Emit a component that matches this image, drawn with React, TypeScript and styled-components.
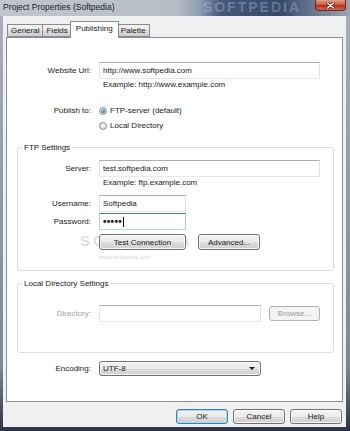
import React from 'react';
import styled, { createGlobalStyle, css } from 'styled-components';

const GlobalStyle = createGlobalStyle`
  html, body {
    margin: 0;
    padding: 0;
  }
  body {
    width: 350px;
    height: 431px;
    overflow: hidden;
    font-family: 'Liberation Sans', Arial, sans-serif;
    font-size: 8px;
    color: #1a1a1a;
  }
`;

const Frame = styled.div`
  width: 350px;
  height: 431px;
  box-sizing: border-box;
  display: flex;
  flex-direction: column;
  padding-bottom: 4px;
  background: linear-gradient(to bottom, #a7b0bb 0%, #7c8796 85%, #2b3442 100%);
`;

const TitleBar = styled.div`
  height: 16px;
  flex: none;
  display: flex;
  align-items: flex-start;
  overflow: hidden;
  background: linear-gradient(
    to right,
    #bfc6ce 0%,
    #b6bec8 50%,
    #8e9db2 57%,
    #44587a 63%,
    #34496b 80%,
    #62728c 88%,
    #9aa4b2 100%
  );
`;

const Title = styled.span`
  font-size: 8.5px;
  line-height: 14px;
  padding-left: 3px;
  color: #1c1c1c;
  white-space: nowrap;
`;

const TitleMark = styled.span`
  margin-left: auto;
  font-size: 14px;
  line-height: 14px;
  font-weight: bold;
  letter-spacing: 2px;
  color: rgba(190, 205, 225, 0.35);
  white-space: nowrap;
`;

const CloseButton = styled.div`
  width: 31px;
  height: 11px;
  margin-left: 14px;
  margin-right: 4px;
  flex: none;
  display: flex;
  align-items: center;
  justify-content: center;
  box-sizing: border-box;
  border: 1px solid #6b2a22;
  border-top: none;
  border-radius: 0 0 4px 4px;
  background: linear-gradient(to bottom, #e3a08e 0%, #cf5d45 45%, #b8321c 55%, #d2694d 100%);
`;

const Body = styled.div`
  flex: 1;
  margin: 0 4px 0 3px;
  display: flex;
  flex-direction: column;
  background: #f0f0f0;
`;

const TabStrip = styled.div`
  display: flex;
  align-items: flex-end;
  height: 14px;
  padding: 7px 0 0 4px;
  position: relative;
  z-index: 1;
`;

const Tab = styled.div<{ $active?: boolean }>`
  box-sizing: border-box;
  padding: 0 3px;
  height: 13px;
  line-height: 11px;
  border: 1px solid #898c95;
  border-right: none;
  background: linear-gradient(to bottom, #f2f2f2 0%, #ebebeb 50%, #dddddd 50%, #cfcfcf 100%);
  white-space: nowrap;

  &:last-child {
    border-right: 1px solid #898c95;
  }

  ${p =>
    p.$active &&
    css`
      height: 17px;
      line-height: 13px;
      margin: 0 -1px -1px -1px;
      padding: 0 5px;
      border-right: 1px solid #898c95;
      border-bottom: none;
      background: #ffffff;
      position: relative;
      z-index: 2;
      & + div {
        border-left: none;
      }
    `}
`;

const Panel = styled.div`
  flex: 1;
  margin-left: 3px;
  margin-right: 3px;
  display: flex;
  flex-direction: column;
  box-sizing: border-box;
  border: 1px solid #898c95;
  background: #ffffff;
`;

const Row = styled.div<{ $top?: number }>`
  display: flex;
  align-items: flex-start;
  margin-top: ${p => p.$top ?? 0}px;
  position: relative;
  z-index: 1;
`;

const Label = styled.div<{ $w: number; $h?: number; $disabled?: boolean }>`
  width: ${p => p.$w}px;
  flex: none;
  margin-right: 8px;
  text-align: right;
  line-height: ${p => p.$h ?? 17}px;
  color: ${p => (p.$disabled ? '#a3a3a3' : '#1a1a1a')};
  white-space: nowrap;
`;

const Stack = styled.div`
  display: flex;
  flex-direction: column;
`;

const TextBox = styled.div<{ $w: number; $focus?: boolean }>`
  width: ${p => p.$w}px;
  height: 17px;
  box-sizing: border-box;
  padding: 0 3px;
  line-height: 15px;
  border: 1px solid;
  border-color: #abadb3 #dbdfe6 #e3e9ef #e2e3ea;
  background: #ffffff;
  display: flex;
  align-items: center;
  white-space: nowrap;

  ${p =>
    p.$focus &&
    css`
      border-color: #3d7bad #a4c9e3 #b7d9ed #b5cfe7;
    `}
`;

const Dots = styled.span`
  font-size: 10px;
  line-height: 15px;
  letter-spacing: 0.3px;
  font-weight: bold;
  color: #222222;
`;

const Caret = styled.span`
  display: inline-block;
  width: 1px;
  height: 10px;
  margin-left: 1px;
  background: #000000;
`;

const Hint = styled.div`
  margin-top: 1px;
  padding-left: 4px;
  line-height: 10px;
  white-space: nowrap;
`;

const RadioLine = styled.div`
  display: flex;
  align-items: center;
  height: 15px;
  gap: 3px;
`;

const RadioDot = styled.span<{ $checked?: boolean }>`
  width: 8px;
  height: 8px;
  box-sizing: border-box;
  border-radius: 50%;
  border: 1px solid #8e8f8f;
  background: radial-gradient(circle at 50% 40%, #ffffff 0%, #e8e8e8 50%, #c9c9c9 100%);
  display: flex;
  align-items: center;
  justify-content: center;

  ${p =>
    p.$checked &&
    css`
      &::after {
        content: '';
        width: 4px;
        height: 4px;
        border-radius: 50%;
        background: radial-gradient(circle at 40% 35%, #9ad3f5 0%, #2f77b0 55%, #1c4a7a 100%);
      }
    `}
`;

const Group = styled.div<{ $top: number; $pt: number; $pb: number }>`
  position: relative;
  margin: ${p => p.$top}px 8px 0 10px;
  padding: ${p => p.$pt}px 0 ${p => p.$pb}px 0;
  border: 1px solid #d5dfe5;
  border-radius: 3px;
`;

const Legend = styled.span`
  position: absolute;
  top: -6px;
  left: 4px;
  padding: 0 2px;
  line-height: 11px;
  background: #ffffff;
  white-space: nowrap;
`;

const Watermark = styled.div`
  position: absolute;
  left: 62px;
  top: 85px;
  pointer-events: none;
  font-size: 15px;
  line-height: 15px;
  font-weight: bold;
  letter-spacing: 3px;
  color: rgba(140, 140, 140, 0.28);
  white-space: nowrap;
  z-index: 0;
`;

const WatermarkUrl = styled.div`
  position: absolute;
  left: 81px;
  top: 106px;
  pointer-events: none;
  font-size: 6px;
  color: rgba(150, 150, 150, 0.45);
  white-space: nowrap;
`;

const ButtonRow = styled.div<{ $gap: number }>`
  display: flex;
  align-items: center;
  gap: ${p => p.$gap}px;
`;

const Button = styled.div<{ $w: number; $h?: number; $default?: boolean; $disabled?: boolean }>`
  width: ${p => p.$w}px;
  height: ${p => p.$h ?? 16}px;
  box-sizing: border-box;
  display: flex;
  align-items: center;
  justify-content: center;
  border: 1px solid #707070;
  border-radius: 3px;
  background: linear-gradient(to bottom, #f2f2f2 0%, #ebebeb 50%, #dddddd 50%, #cfcfcf 100%);
  box-shadow: inset 0 0 0 1px rgba(255, 255, 255, 0.8);
  white-space: nowrap;

  ${p =>
    p.$default &&
    css`
      border-color: #3c7fb1;
      box-shadow: inset 0 0 0 1px #9fdcfb;
    `}

  ${p =>
    p.$disabled &&
    css`
      border-color: #adb2b5;
      background: #f4f4f4;
      box-shadow: none;
      color: #9a9a9a;
    `}
`;

const Select = styled.div<{ $w: number }>`
  width: ${p => p.$w}px;
  height: 15px;
  box-sizing: border-box;
  display: flex;
  align-items: center;
  padding: 0 5px 0 3px;
  border: 1px solid #707070;
  border-radius: 3px;
  background: linear-gradient(to bottom, #f2f2f2 0%, #ebebeb 50%, #dddddd 50%, #cfcfcf 100%);
  box-shadow: inset 0 0 0 1px rgba(255, 255, 255, 0.8);
`;

const Arrow = styled.span`
  margin-left: auto;
  width: 0;
  height: 0;
  border-left: 3px solid transparent;
  border-right: 3px solid transparent;
  border-top: 3px solid #1a1a1a;
`;

const Footer = styled.div`
  height: 25px;
  flex: none;
  display: flex;
  justify-content: flex-end;
  align-items: flex-start;
  gap: 5px;
  padding: 7px 4px 0 0;
  box-sizing: border-box;
`;

export default function App() {
  return (
    <>
      <GlobalStyle />
      <Frame>
        <TitleBar>
          <Title>Project Properties (Softpedia)</Title>
          <TitleMark>SOFTPEDIA</TitleMark>
          <CloseButton>
            <svg width="9" height="7" viewBox="0 0 9 7">
              <path d="M1.5 1 L7.5 6 M7.5 1 L1.5 6" stroke="#3a1a14" strokeWidth="2.6" strokeLinecap="round" />
              <path d="M1.5 1 L7.5 6 M7.5 1 L1.5 6" stroke="#ffffff" strokeWidth="1.5" strokeLinecap="round" />
            </svg>
          </CloseButton>
        </TitleBar>

        <Body>
          <TabStrip>
            <Tab>General</Tab>
            <Tab>Fields</Tab>
            <Tab $active>Publishing</Tab>
            <Tab>Palette</Tab>
          </TabStrip>

          <Panel>
            <Row $top={24}>
              <Label $w={84}>Website Url:</Label>
              <Stack>
                <TextBox $w={221}>http://www.softpedia.com</TextBox>
                <Hint>Example: http://www.example.com</Hint>
              </Stack>
            </Row>

            <Row $top={13}>
              <Label $w={84} $h={15}>Publish to:</Label>
              <Stack>
                <RadioLine>
                  <RadioDot $checked />
                  FTP-server (default)
                </RadioLine>
                <RadioLine>
                  <RadioDot />
                  Local Directory
                </RadioLine>
              </Stack>
            </Row>

            <Group $top={14} $pt={12} $pb={20}>
              <Legend>FTP Settings</Legend>
              <Watermark>SOFTPEDIA</Watermark>
              <WatermarkUrl>www.softpedia.com</WatermarkUrl>
              <Row>
                <Label $w={73}>Server:</Label>
                <Stack>
                  <TextBox $w={221}>test.softpedia.com</TextBox>
                  <Hint>Example: ftp.example.com</Hint>
                </Stack>
              </Row>
              <Row $top={7}>
                <Label $w={73}>Username:</Label>
                <TextBox $w={87}>Softpedia</TextBox>
              </Row>
              <Row $top={1}>
                <Label $w={73}>Password:</Label>
                <TextBox $w={87} $focus>
                  <Dots>•••••</Dots>
                  <Caret />
                </TextBox>
              </Row>
              <Row $top={4}>
                <Label $w={73} />
                <ButtonRow $gap={12}>
                  <Button $w={87}>Test Connection</Button>
                  <Button $w={62}>Advanced...</Button>
                </ButtonRow>
              </Row>
            </Group>

            <Group $top={12} $pt={21} $pb={30}>
              <Legend>Local Directory Settings</Legend>
              <Row>
                <Label $w={73} $disabled>Directory:</Label>
                <ButtonRow $gap={8}>
                  <TextBox $w={162} />
                  <Button $w={51} $h={15} $disabled>Browse...</Button>
                </ButtonRow>
              </Row>
            </Group>

            <Row $top={8}>
              <Label $w={84} $h={15}>Encoding:</Label>
              <Select $w={162}>
                UTF-8
                <Arrow />
              </Select>
            </Row>
          </Panel>

          <Footer>
            <Button $w={52} $h={15} $default>OK</Button>
            <Button $w={52} $h={15}>Cancel</Button>
            <Button $w={52} $h={15}>Help</Button>
          </Footer>
        </Body>
      </Frame>
    </>
  );
}
